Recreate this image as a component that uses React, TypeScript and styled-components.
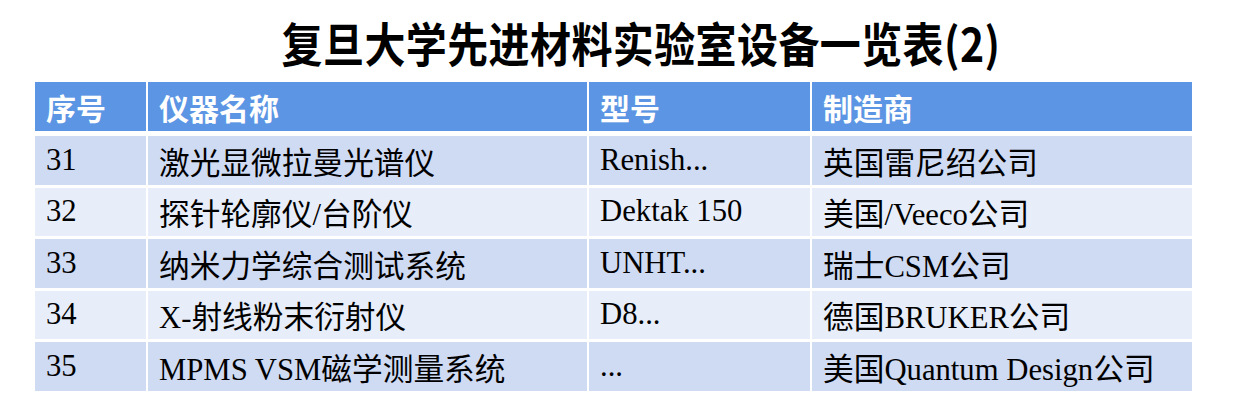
import React from 'react';
import styled, { createGlobalStyle } from 'styled-components';

const GlobalStyle = createGlobalStyle`
  html, body {
    margin: 0;
    padding: 0;
    background: #ffffff;
  }
`;

const Page = styled.div`
  width: 1234px;
  height: 407px;
  overflow: hidden;
  display: flex;
  flex-direction: column;
  padding-top: 16px;
  box-sizing: border-box;
`;

const Title = styled.h1`
  margin: 0 0 14px 48px;
  height: 52px;
  display: flex;
  align-items: center;
  justify-content: center;
  font-family: "Noto Sans CJK SC", "Liberation Sans", sans-serif;
  font-weight: 700;
  font-size: 41px;
  line-height: 1;
  color: #000;
  transform: scaleY(1.13);
  letter-spacing: 0.4px;
`;

const Table = styled.div`
  margin-left: 35px;
  width: 1157px;
  display: flex;
  flex-direction: column;
  gap: 3px;
`;

const Row = styled.div<{ $head?: boolean }>`
  display: grid;
  grid-template-columns: 111px 439px 221px 380px;
  column-gap: 2px;
  height: ${(p) => (p.$head ? '49px' : '48.5px')};
  margin-bottom: ${(p) => (p.$head ? '2px' : '0')};
`;

const HeadCell = styled.div`
  background: #5b95e3;
  color: #ffffff;
  display: flex;
  align-items: center;
  padding-left: 11px;
  font-family: "Noto Sans CJK SC", sans-serif;
  font-weight: 700;
  font-size: 30px;
`;

const Cell = styled.div<{ $band: boolean }>`
  background: ${(p) => (p.$band ? '#cfdaf3' : '#e8eef9')};
  color: #000;
  display: flex;
  align-items: center;
  padding-left: 11px;
  font-family: "Liberation Serif", "Noto Sans CJK SC", serif;
  font-size: 30.7px;
  white-space: nowrap;
`;

const headers = ['序号', '仪器名称', '型号', '制造商'];

const rows = [
  ['31', '激光显微拉曼光谱仪', 'Renish...', '英国雷尼绍公司'],
  ['32', '探针轮廓仪/台阶仪', 'Dektak 150', '美国/Veeco公司'],
  ['33', '纳米力学综合测试系统', 'UNHT...', '瑞士CSM公司'],
  ['34', 'X-射线粉末衍射仪', 'D8...', '德国BRUKER公司'],
  ['35', 'MPMS VSM磁学测量系统', '...', '美国Quantum Design公司'],
];

const App = () => {
  return (
    <>
      <GlobalStyle />
      <Page>
        <Title>复旦大学先进材料实验室设备一览表(2)</Title>
        <Table>
          <Row $head>
            {headers.map((h) => (
              <HeadCell key={h}>{h}</HeadCell>
            ))}
          </Row>
          {rows.map((r, i) => (
            <Row key={r[0]}>
              {r.map((c, j) => (
                <Cell key={j} $band={i % 2 === 0}>
                  {c}
                </Cell>
              ))}
            </Row>
          ))}
        </Table>
      </Page>
    </>
  );
};

export default App;
